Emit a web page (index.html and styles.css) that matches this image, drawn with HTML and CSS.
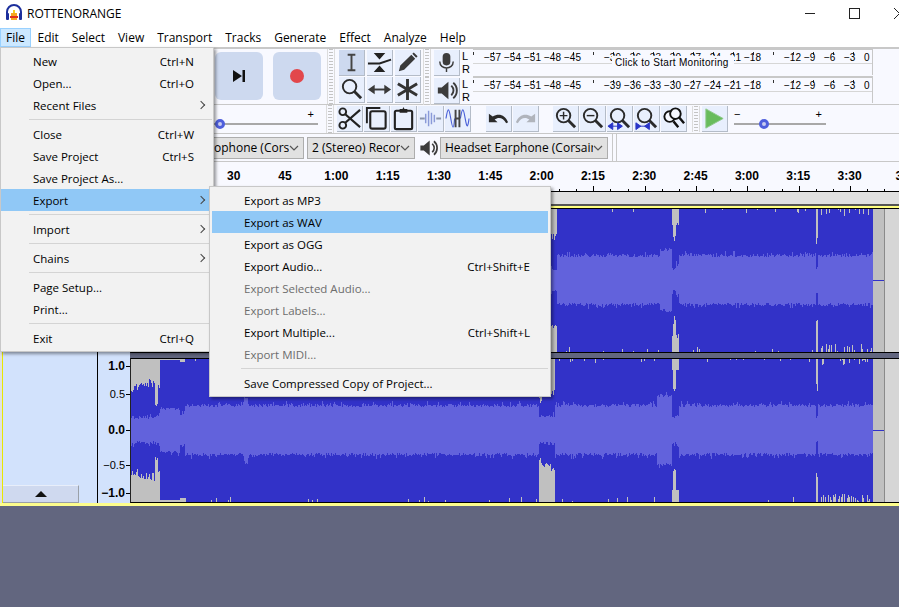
FILE: index.html
```html
<!DOCTYPE html>
<html lang="en">
<head>
    <meta charset="UTF-8">
    <title>ROTTENORANGE</title>
    <link rel="stylesheet" href="styles.css">
</head>
<body>
    <svg class="defs" width="0" height="0">
        <symbol id="speaker" viewBox="0 0 26 26">
            <path d="M4 10h4l7-6v18l-7-6H4z" fill="#3c3c3c"/>
            <path d="M18 8c3 3 3 7 0 10M20 5c5 4 5 12 0 16" fill="none" stroke="#3c3c3c" stroke-width="2"/>
        </symbol>
        <symbol id="lens" viewBox="0 0 26 26">
            <circle cx="11" cy="10" r="7" fill="none" stroke="#2b2b2b" stroke-width="2"/>
            <path d="M16 15l7 7" stroke="#2b2b2b" stroke-width="3"/>
        </symbol>
        <symbol id="chevron" viewBox="0 0 10 6">
            <path d="M1 1l4 4 4-4" fill="none" stroke="#555" stroke-width="1.2"/>
        </symbol>
    </svg>

    <!-- Title bar -->
    <header class="titlebar">
        <svg class="app-icon" width="18" height="18" viewBox="0 0 18 18">
            <path d="M2 11V8a7 7 0 0 1 14 0v3" fill="none" stroke="#1c2f9c" stroke-width="2"/>
            <rect x="1" y="9" width="3" height="7" rx="1" fill="#1c2f9c"/>
            <rect x="14" y="9" width="3" height="7" rx="1" fill="#1c2f9c"/>
            <path d="M5 12h8v2H5z" fill="#e0301e"/>
            <path d="M6 9h6v3H6zM6 14h6v2H6z" fill="#f5a623"/>
            <path d="M8 6h2v3H8z" fill="#f5d020"/>
        </svg>
        <span class="app-title">ROTTENORANGE</span>
        <div class="win-controls">
            <span class="win-btn"><i class="win-min"></i></span>
            <span class="win-btn"><i class="win-max"></i></span>
            <span class="win-btn">
                <svg width="11" height="11" viewBox="0 0 11 11"><path d="M0 0l11 11M11 0L0 11" stroke="#222"/></svg>
            </span>
        </div>
    </header>

    <!-- Menu bar -->
    <nav class="menubar">
        <a class="menubar-item active">File</a>
        <a class="menubar-item">Edit</a>
        <a class="menubar-item">Select</a>
        <a class="menubar-item">View</a>
        <a class="menubar-item">Transport</a>
        <a class="menubar-item">Tracks</a>
        <a class="menubar-item">Generate</a>
        <a class="menubar-item">Effect</a>
        <a class="menubar-item">Analyze</a>
        <a class="menubar-item">Help</a>
    </nav>

    <!-- Toolbars -->
    <section class="tool-row tool-row-main">
        <button class="transport-btn">
            <svg width="14" height="14" viewBox="0 0 14 14"><path d="M1 1l9 6-9 6zM10.500 1H13v12h-2.500z" fill="#111"/></svg>
        </button>
        <button class="transport-btn">
            <span class="record-dot"></span>
        </button>
        <div class="grip grip-tall"></div>
        <div class="tools-grid">
            <button class="tool-btn selected">
                <svg viewBox="0 0 26 26"><path d="M9 5h8M13 5v16M9 21h8" fill="none" stroke="#444" stroke-width="2"/></svg>
            </button>
            <button class="tool-btn">
                <svg viewBox="0 0 26 26"><path d="M7 3h12l-6 7zM13 16l6 7H7z" fill="#222"/><path d="M1 14h12l12-4" fill="none" stroke="#222" stroke-width="2"/></svg>
            </button>
            <button class="tool-btn">
                <svg viewBox="0 0 26 26"><path d="M4 22l1.500-6L17 5l4 4L9.500 20.500zM18 4l1.500-1.500 4 4L22 8z" fill="#3a3a3a"/></svg>
            </button>
            <button class="tool-btn">
                <svg><use href="#lens"/></svg>
            </button>
            <button class="tool-btn">
                <svg viewBox="0 0 26 26"><path d="M6 13h14" stroke="#3a3a3a" stroke-width="2"/><path d="M1 13l7-5v10zM25 13l-7-5v10z" fill="#3a3a3a"/></svg>
            </button>
            <button class="tool-btn">
                <svg viewBox="0 0 26 26"><path d="M13 2v22M3 7l20 12M23 7L3 19" stroke="#333" stroke-width="3"/></svg>
            </button>
        </div>
        <div class="meters">
            <div class="meter-row">
                <div class="grip"></div>
                <button class="tool-btn">
                    <svg viewBox="0 0 26 26"><rect x="9" y="3" width="8" height="13" rx="4" fill="#3c3c3c"/><path d="M6 12c0 9 14 9 14 0M13 19v4" fill="none" stroke="#3c3c3c" stroke-width="1.500"/></svg>
                </button>
                <div class="lr"><span>L</span><span>R</span></div>
                <div class="meter">
                    <div class="meter-scale">
                        <span>−57</span><span>−54</span><span>−51</span><span>−48</span><span>−45</span><span></span><span>−39</span><span>−36</span><span>−33</span><span>−30</span><span>−27</span><span>−24</span><span>−21</span><span>−18</span><span></span><span>−12</span><span>−9</span><span>−6</span><span>−3</span><span>0</span>
                    </div>
                    <div class="meter-hint">Click to Start Monitoring</div>
                </div>
            </div>
            <div class="meter-row">
                <div class="grip"></div>
                <button class="tool-btn">
                    <svg><use href="#speaker"/></svg>
                </button>
                <div class="lr"><span>L</span><span>R</span></div>
                <div class="meter">
                    <div class="meter-scale">
                        <span>−57</span><span>−54</span><span>−51</span><span>−48</span><span>−45</span><span></span><span>−39</span><span>−36</span><span>−33</span><span>−30</span><span>−27</span><span>−24</span><span>−21</span><span>−18</span><span></span><span>−12</span><span>−9</span><span>−6</span><span>−3</span><span>0</span>
                    </div>
                </div>
            </div>
        </div>
    </section>

    <section class="tool-row tool-row-edit">
        <div class="slider slider-mixer">
            <span class="slider-plus">+</span>
            <i class="slider-thumb"></i>
        </div>
        <div class="grip"></div>
        <div class="btn-group">
            <button class="tool-btn">
                <svg viewBox="0 0 26 26"><circle cx="6" cy="6" r="3.500" fill="none" stroke="#222" stroke-width="2"/><circle cx="6" cy="20" r="3.500" fill="none" stroke="#222" stroke-width="2"/><path d="M8 8l16 14M8 18L24 4" stroke="#222" stroke-width="2.200"/></svg>
            </button>
            <button class="tool-btn">
                <svg viewBox="0 0 26 26"><path d="M3 18V2h14" fill="none" stroke="#222" stroke-width="2"/><rect x="6.500" y="5.500" width="16" height="18" rx="2" fill="none" stroke="#222" stroke-width="2.200"/></svg>
            </button>
            <button class="tool-btn">
                <svg viewBox="0 0 26 26"><rect x="4" y="5" width="18" height="19" rx="1.500" fill="none" stroke="#222" stroke-width="2.200"/><path d="M9 3h3l1-2 1 2h3v4H9z" fill="#222"/></svg>
            </button>
            <button class="tool-btn">
                <svg viewBox="0 0 26 26"><path d="M2 13h5M19 13h5" stroke="#8a94a8" stroke-width="2"/><path d="M8 8v10M11 5v16M14 7v12M17 9v8" stroke="#8a9ad8" stroke-width="1.500"/></svg>
            </button>
            <button class="tool-btn">
                <svg viewBox="0 0 26 26"><path d="M1 13c2-12 3-12 5 0s3 12 4 0M16 13c2-12 3-12 5 0s3 8 4 0" fill="none" stroke="#4a60d8" stroke-width="1.200"/><path d="M11 4v18M15 4v18M11 13h4" stroke="#444" stroke-width="2"/></svg>
            </button>
        </div>
        <div class="btn-group btn-group-history">
            <button class="tool-btn">
                <svg viewBox="0 0 26 26"><path d="M3 8v9h9l-3-3c4-3 9-2 12 4l2-1C20 9 13 7 7 11z" fill="#2b2b2b"/></svg>
            </button>
            <button class="tool-btn">
                <svg viewBox="0 0 26 26"><path d="M23 8v9h-9l3-3c-4-3-9-2-12 4l-2-1C6 9 13 7 19 11z" fill="#b0b4bc"/></svg>
            </button>
        </div>
        <div class="btn-group btn-group-zoom">
            <button class="tool-btn">
                <svg viewBox="0 0 26 26"><use href="#lens"/><path d="M7 10h8M11 6v8" stroke="#2b2b2b" stroke-width="1.500"/></svg>
            </button>
            <button class="tool-btn">
                <svg viewBox="0 0 26 26"><use href="#lens"/><path d="M7 10h8" stroke="#2b2b2b" stroke-width="1.500"/></svg>
            </button>
            <button class="tool-btn">
                <svg viewBox="0 0 26 26"><use href="#lens"/><path d="M2 21h13M1 21l5-3.500v7zM16 21l-5-3.500v7z" fill="#2a35c8" stroke="#2a35c8"/></svg>
            </button>
            <button class="tool-btn">
                <svg viewBox="0 0 26 26"><use href="#lens"/><path d="M2 21h14M7 21l-5-3.500v7zM11 21l5-3.500v7z" fill="#2a35c8" stroke="#2a35c8"/></svg>
            </button>
            <button class="tool-btn">
                <svg viewBox="0 0 26 26"><circle cx="9" cy="11" r="5.500" fill="#f6f8ff" stroke="#111" stroke-width="2"/><circle cx="15" cy="8" r="5.500" fill="#f6f8ff" stroke="#111" stroke-width="2"/><path d="M13 16l5 6M19 12l5 6" stroke="#111" stroke-width="2.500"/></svg>
            </button>
        </div>
        <div class="grip grip-play"></div>
        <button class="tool-btn">
            <svg viewBox="0 0 26 26"><path d="M4 3l18 10L4 23z" fill="#68bc5c" stroke="#8cc888"/></svg>
        </button>
        <div class="slider slider-speed">
            <span class="slider-minus">−</span>
            <span class="slider-plus">+</span>
            <i class="slider-thumb"></i>
        </div>
    </section>

    <section class="tool-row tool-row-device">
        <div class="dropdown dropdown-mic">
            <span class="dropdown-text">ophone (Cors</span>
            <svg width="10" height="6"><use href="#chevron"/></svg>
        </div>
        <div class="dropdown dropdown-channels">
            <span class="dropdown-text">2 (Stereo) Recor</span>
            <svg width="10" height="6"><use href="#chevron"/></svg>
        </div>
        <svg class="device-speaker" width="22" height="22"><use href="#speaker"/></svg>
        <div class="dropdown dropdown-output">
            <span class="dropdown-text">Headset Earphone (Corsair '</span>
            <svg width="10" height="6"><use href="#chevron"/></svg>
        </div>
        <div class="grip-thin"></div>
    </section>

    <!-- Timeline -->
    <section class="ruler">
        <span>30</span><span>45</span><span>1:00</span><span>1:15</span><span>1:30</span><span>1:45</span><span>2:00</span><span>2:15</span><span>2:30</span><span>2:45</span><span>3:00</span><span>3:15</span><span>3:30</span><span>3:</span>
    </section>
    <div class="ruler-gap"></div>

    <!-- Tracks -->
    <main class="tracks">
        <div class="track">
            <div class="track-panel"></div>
            <div class="scale"></div>
            <div class="wave-col">
                <div class="wave">
                    <div class="wave-body" id="wave1"></div>
                    <div class="wave-clip"></div>
                    <div class="wave-end"></div>
                </div>
            </div>
        </div>
        <div class="track track-last">
            <div class="track-panel">
                <button class="collapse-btn"><i></i></button>
            </div>
            <div class="scale">
                <span class="strong">1.0</span>
                <span>0.5</span>
                <span class="strong">0.0</span>
                <span>−0.5</span>
                <span class="strong">−1.0</span>
            </div>
            <div class="wave-col">
                <div class="wave">
                    <div class="wave-body" id="wave2"></div>
                    <div class="wave-clip"></div>
                    <div class="wave-end"></div>
                </div>
            </div>
        </div>
    </main>

    <!-- File menu -->
    <div class="menu menu-file">
        <div class="menu-item">New<span class="shortcut">Ctrl+N</span></div>
        <div class="menu-item">Open...<span class="shortcut">Ctrl+O</span></div>
        <div class="menu-item">Recent Files<i class="arrow"></i></div>
        <div class="menu-sep"></div>
        <div class="menu-item">Close<span class="shortcut">Ctrl+W</span></div>
        <div class="menu-item">Save Project<span class="shortcut">Ctrl+S</span></div>
        <div class="menu-item">Save Project As...</div>
        <div class="menu-item highlighted">Export<i class="arrow"></i></div>
        <div class="menu-sep"></div>
        <div class="menu-item">Import<i class="arrow"></i></div>
        <div class="menu-sep"></div>
        <div class="menu-item">Chains<i class="arrow"></i></div>
        <div class="menu-sep"></div>
        <div class="menu-item">Page Setup...</div>
        <div class="menu-item">Print...</div>
        <div class="menu-sep"></div>
        <div class="menu-item">Exit<span class="shortcut">Ctrl+Q</span></div>
    </div>

    <!-- Export submenu -->
    <div class="menu menu-export">
        <div class="menu-item">Export as MP3</div>
        <div class="menu-item highlighted">Export as WAV</div>
        <div class="menu-item">Export as OGG</div>
        <div class="menu-item">Export Audio...<span class="shortcut">Ctrl+Shift+E</span></div>
        <div class="menu-item disabled">Export Selected Audio...</div>
        <div class="menu-item disabled">Export Labels...</div>
        <div class="menu-item">Export Multiple...<span class="shortcut">Ctrl+Shift+L</span></div>
        <div class="menu-item disabled">Export MIDI...</div>
        <div class="menu-sep"></div>
        <div class="menu-item">Save Compressed Copy of Project...</div>
    </div>

    <script src="waveform.js"></script>
</body>
</html>
```

FILE: styles.css
```css
* {
    margin: 0;
    padding: 0;
    box-sizing: border-box;
}

body {
    width: 899px;
    height: 607px;
    overflow: hidden;
    position: relative;
    font-family: 'Open Sans', 'Noto Sans', sans-serif;
    font-size: 11.5px;
    color: #000;
    background: #62667f;
}

button {
    border: none;
    background: none;
    font: inherit;
}

.defs {
    position: absolute;
}

/* Title bar */
.titlebar {
    display: flex;
    align-items: center;
    height: 26px;
    padding-left: 5px;
    background: #fff;
}

.app-icon {
    margin-right: 4px;
}

.app-title {
    font-size: 12px;
}

.win-controls {
    display: flex;
    margin-left: auto;
    margin-right: -23px;
}

.win-btn {
    display: flex;
    justify-content: center;
    align-items: center;
    width: 45px;
    height: 26px;
}

.win-min {
    width: 10px;
    height: 1px;
    background: #222;
}

.win-max {
    width: 11px;
    height: 11px;
    border: 1px solid #222;
}

/* Menu bar */
.menubar {
    display: flex;
    height: 21px;
    padding-top: 2px;
    background: #fff;
}

.menubar-item {
    display: flex;
    align-items: center;
    padding: 0 6.500px;
    font-size: 12px;
}

.menubar-item.active {
    background: #cce8ff;
    border: 1px solid #99d1ff;
    padding: 0 5px;
}

/* Toolbars */
.tool-row {
    display: flex;
    background: #f8f9ff;
    border-top: 1px solid #c8c8c8;
}

.tool-row-main {
    height: 57px;
    padding-left: 215px;
    border-top: 2px solid #c8c8c8;
    align-items: flex-start;
}

.tool-row-edit {
    height: 29px;
    padding-left: 214px;
    align-items: center;
}

.tool-row-device {
    height: 28px;
    padding-left: 214px;
    align-items: center;
}

.tool-btn {
    display: block;
    width: 26px;
    height: 26px;
    flex: none;
    background: #e8effd;
    border-right: 1px solid #b4bcc8;
    border-bottom: 1px solid #b4bcc8;
}

.tool-btn svg {
    display: block;
    width: 25px;
    height: 25px;
}

.tool-btn.selected {
    background: #cdd9ef;
}

.transport-btn {
    display: flex;
    justify-content: center;
    align-items: center;
    width: 48px;
    height: 48px;
    margin-top: 3px;
    margin-right: 10px;
    border-radius: 6px;
    background: #cdd9ef;
}

.record-dot {
    width: 14px;
    height: 14px;
    border-radius: 50%;
    background: #e2474b;
}

.grip {
    width: 8px;
    flex: none;
    align-self: stretch;
    margin: 0 3px 0 0;
    border-left: 1px solid #dcdcdc;
    border-right: 1px solid #dcdcdc;
    background: repeating-linear-gradient(to bottom, #c4c4c4 0 1px, transparent 1px 3px) center / 4px 100% no-repeat;
}

.grip-tall {
    margin: 0 4px 0 -4px;
}

.grip-play {
    margin: 0 2px 0 5px;
    height: 26px;
    align-self: center;
}

.grip-thin {
    width: 5px;
    height: 100%;
    margin-left: 4px;
    border-left: 1px solid #c8c8c8;
    border-right: 1px solid #c8c8c8;
}

.tools-grid {
    display: grid;
    grid-template-columns: repeat(3, 26px);
    grid-auto-rows: 26px;
    gap: 1px 2px;
    padding-top: 1px;
    margin-right: 2px;
}

.meters {
    display: flex;
    flex-direction: column;
    flex: 1;
}

.meter-row {
    display: flex;
    height: 28px;
}

.meter-row .tool-btn {
    margin-top: 1px;
}

.lr {
    display: flex;
    flex-direction: column;
    width: 11px;
    margin-left: 2px;
    font-family: 'Liberation Sans', Arial, sans-serif;
    font-size: 11px;
    line-height: 13px;
    padding-top: 1px;
}

.meter {
    position: relative;
    width: 400px;
    height: 27px;
    border-top: 2px solid #c8c8c8;
    border-right: 1px solid #c8c8c8;
    margin-top: -1px;
}

.meter-scale {
    display: flex;
    height: 14px;
    padding-left: 11px;
    align-items: flex-end;
    font-family: 'Liberation Sans', Arial, sans-serif;
    font-size: 10px;
    line-height: 11px;
    border-bottom: 1px solid #d6d6d6;
    background: repeating-linear-gradient(to right, #333 0 1px, transparent 1px 20px) top left / 100% 3px no-repeat;
    background-position: 0 2px;
}

.meter-scale span {
    flex: 0 0 20px;
}

.meter-hint {
    position: absolute;
    left: 139px;
    top: 6px;
    width: 122px;
    height: 13px;
    padding-left: 3px;
    font-family: 'Liberation Sans', Arial, sans-serif;
    font-size: 10px;
    line-height: 13px;
    letter-spacing: 0.3px;
    background: #f8f9ff;
}

.slider {
    position: relative;
    flex: none;
    height: 100%;
    font-family: 'Liberation Sans', Arial, sans-serif;
    background: linear-gradient(#a8a8a8, #a8a8a8) 0 18px / 100% 2px no-repeat;
}

.slider-mixer {
    width: 104px;
    margin-right: 8px;
}

.slider-speed {
    width: 92px;
    margin-left: 6px;
}

.slider-plus,
.slider-minus {
    position: absolute;
    top: 3px;
    font-size: 11px;
    line-height: 12px;
}

.slider-plus {
    right: 4px;
}

.slider-minus {
    left: 0;
}

.slider-thumb {
    position: absolute;
    top: 14px;
    width: 10px;
    height: 10px;
    border-radius: 50%;
    border: 3px solid #4f5fdc;
    background: #c8ccf0;
}

.slider-mixer .slider-thumb {
    left: 1px;
}

.slider-speed .slider-thumb {
    left: 25px;
}

.btn-group {
    display: flex;
    gap: 1px;
    flex: none;
}

.btn-group-history {
    margin-left: 15px;
}

.btn-group-zoom {
    margin-left: 14px;
}

.dropdown {
    display: flex;
    align-items: center;
    height: 22px;
    flex: none;
    padding: 0 4px;
    background: #e1e1e1;
    border: 1px solid #adadad;
    font-size: 12px;
}

.dropdown-text {
    flex: 1;
    overflow: hidden;
    white-space: nowrap;
}

.dropdown-mic {
    width: 90px;
    padding-left: 0;
    border-left: none;
    margin-right: 3px;
}

.dropdown-channels {
    width: 108px;
}

.device-speaker {
    margin: 0 1px 0 2px;
}

.dropdown-output {
    width: 168px;
}

/* Timeline */
.ruler {
    display: flex;
    height: 31px;
    padding: 7px 0 0 208px;
    overflow: hidden;
    border-top: 1px solid #c8c8c8;
    border-bottom: 1px solid #000;
    font-family: 'Liberation Sans', Arial, sans-serif;
    font-size: 12px;
    font-weight: bold;
    line-height: 14px;
    background:
        repeating-linear-gradient(to right, #000 0 1px, transparent 1px 51.330px) 234px 100% / 100% 5px no-repeat,
        repeating-linear-gradient(to right, #000 0 1px, transparent 1px 17.110px) 234px 100% / 100% 2px no-repeat,
        #f8f9ff;
}

.ruler span {
    flex: 0 0 51.330px;
    text-align: center;
}

.ruler-gap {
    height: 16px;
    background: linear-gradient(#e0e0e0 12px, #555 12px, #555 14px, #ffff80 14px);
}

/* Tracks */
.tracks {
    border-bottom: 3px solid #fdfd8c;
    background: #e0e0e0;
}

.track {
    display: flex;
    height: 150px;
    padding-left: 2px;
}

.track-last {
    height: 145px;
}

.track-panel {
    position: relative;
    width: 96px;
    border-left: 1px solid #e8e800;
    border-right: 1px solid #000;
    background: #d2e2fc;
}

.scale {
    display: grid;
    grid-template-rows: 16px 40px 32px 38px 18px;
    width: 32px;
    padding-right: 0;
    background: #d2e2fc;
    font-family: 'Liberation Sans', Arial, sans-serif;
    font-size: 11px;
    text-align: right;
}

.track-last .scale {
    padding-top: 0;
}

.scale span {
    display: flex;
    justify-content: flex-end;
    align-items: center;
}

.scale span::after {
    content: '';
    width: 4px;
    height: 1px;
    margin-left: 1px;
    background: #000;
}

.scale .strong {
    font-size: 12px;
    font-weight: bold;
}

.wave-col {
    flex: 1;
    background: #62667f;
}

.wave {
    display: flex;
    height: 145px;
    border-top: 1px solid #000;
    border-bottom: 1px solid #000;
    border-left: 1px solid #222;
}

.wave-body {
    width: 742px;
    flex: none;
    background: #c0c0c0;
}

.wave-body svg {
    display: block;
}

.wave-clip {
    width: 11px;
    flex: none;
    background: linear-gradient(#3232c8, #3232c8) 0 71px / 100% 1px no-repeat, #c0c0c0;
}

.wave-end {
    flex: 1;
    border-left: 1px solid #8a8a8a;
    background: #d6d6d6;
}

.collapse-btn {
    position: absolute;
    left: 0;
    bottom: 0;
    display: flex;
    justify-content: center;
    align-items: center;
    width: 76px;
    height: 18px;
    background: #cfd9ef;
    border-top: 1px solid #e8eefa;
    border-right: 1px solid #9aa0a8;
    border-bottom: 1px solid #9aa0a8;
}

.collapse-btn i {
    border-left: 6px solid transparent;
    border-right: 6px solid transparent;
    border-bottom: 6px solid #111;
}

/* Menus */
.menu {
    position: absolute;
    padding: 2px 0;
    background: #f2f2f2;
    border: 1px solid #c8c8c8;
    box-shadow: 2px 2px 3px rgba(0, 0, 0, 0.4);
}

.menu-file {
    left: 0;
    top: 47px;
    width: 214px;
}

.menu-export {
    left: 209px;
    top: 186px;
    width: 342px;
    padding: 2px;
}

.menu-item {
    display: flex;
    align-items: center;
    height: 22px;
    padding: 0 19px 0 32px;
    white-space: nowrap;
}

.menu-item.highlighted {
    background: #90c8f6;
}

.menu-item.disabled {
    color: #6d6d6d;
}

.menu-export .menu-item {
    padding-right: 18px;
}

.shortcut {
    margin-left: auto;
}

.arrow {
    width: 6px;
    height: 6px;
    margin-left: auto;
    margin-right: -10px;
    border-top: 1px solid #444;
    border-right: 1px solid #444;
    transform: rotate(45deg);
}

.menu-sep {
    height: 1px;
    margin: 3px 1px 3px 28px;
    background: #d4d4d4;
}

.menu-export .menu-sep {
    margin: 3px 0 3px 29px;
}
```

FILE: waveform.js
```js
// draws the two stereo channels, one 1px column at a time
var WIDTH = 742, MID = 71, FULL = 72, LEFT = 131;

var seed = 7;
function rand() {
    seed = (seed * 16807) % 2147483647;
    return seed / 2147483647;
}

// x0, x1 are page pixels. peak / rms are amplitudes, in px from the centre line
var channels = [
    { id: 'wave1', parts: [
        [540, 551, 45, 13], [552, 556, 44, 10],
        [660, 671, 72, 30], [672, 672, 58, 12], [673, 675, 40, 10], [676, 678, 56, 14],
        [816, 817, 40, 12]
    ] },
    { id: 'wave2', parts: [
        [131, 138, 42, 12], [139, 154, 47, 12], [155, 157, 27, 13], [158, 159, 44, 13],
        [160, 179, 70, 21], [180, 184, 68, 15], [244, 247, 72, 32],
        [539, 541, 30, 13], [542, 554, 37, 13],
        [657, 671, 72, 34], [672, 672, 60, 13], [673, 675, 40, 12], [676, 678, 60, 14],
        [816, 817, 43, 12]
    ] }
];

function partAt(parts, x) {
    for (var i = 0; i < parts.length; i++) {
        if (x >= parts[i][0] && x <= parts[i][1]) return parts[i];
    }
    return null;
}

function nick(x) {
    // the louder stretches only just touch the top and bottom now and then
    var busy = x > 820 && x < 870;
    var odds = busy ? 0.35 : 0.05;
    if (rand() > odds) return 0;
    return 1 + rand() * (busy ? 7 : 4);
}

function drawChannel(ch) {
    var peak = '', rms = '';
    for (var i = 0; i < WIDTH; i++) {
        var x = LEFT + i, part = partAt(ch.parts, x);
        var top = part ? part[2] : FULL - nick(x);
        var bot = part ? part[2] : FULL - nick(x);
        if (part && part[2] < 60) {
            top += rand() * 8 - 4;
            bot += rand() * 8 - 4;
        }
        var level = part ? part[3] : 24;
        var rmsTop = level + rand() * 3 - 1 + (rand() < 0.1 ? 3 : 0);
        var rmsBot = level + rand() * 3 - 1 + (rand() < 0.1 ? 3 : 0);
        var col = x - LEFT + 0.5;
        peak += 'M' + col + ' ' + Math.round(MID - top) + 'V' + Math.round(MID + bot);
        rms += 'M' + col + ' ' + Math.round(MID - rmsTop) + 'V' + Math.round(MID + rmsBot);
    }
    var box = document.getElementById(ch.id);
    box.innerHTML = '<svg width="' + WIDTH + '" height="143" shape-rendering="crispEdges">' +
        '<path d="' + peak + '" stroke="#3232c8" fill="none"/>' +
        '<path d="' + rms + '" stroke="#6262dc" fill="none"/></svg>';
}

channels.forEach(drawChannel);
```
